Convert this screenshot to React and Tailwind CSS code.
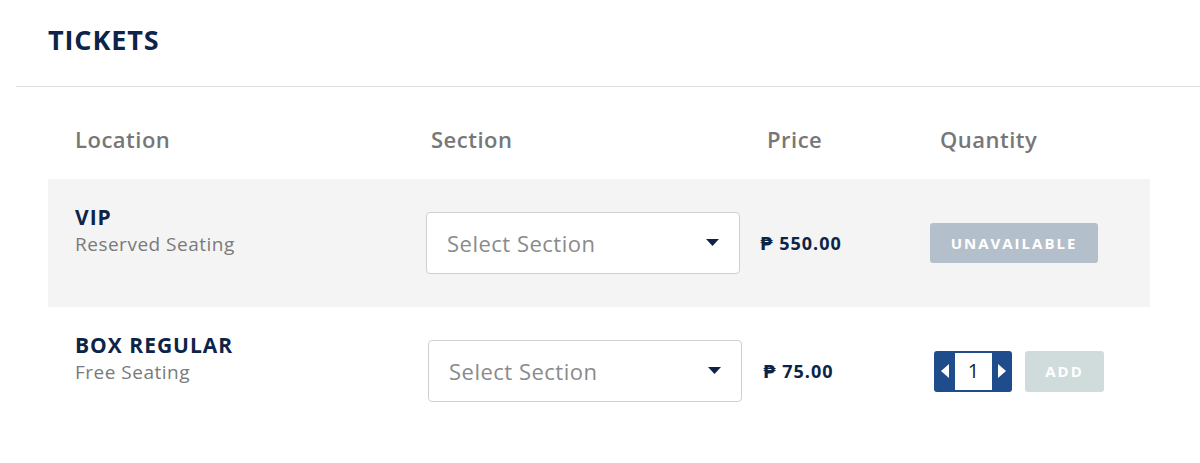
import React from "react";

const FONT = { fontFamily: '"Open Sans", "DejaVu Sans", sans-serif' };

function Caret() {
  return (
    <svg width="13" height="8" viewBox="0 0 13 8" className="shrink-0">
      <path d="M0 0 L13 0 L6.5 7 Z" fill="#0d2448" />
    </svg>
  );
}

function SelectBox() {
  return (
    <div className="w-[314px] h-[62px] bg-white border border-[#cfcfcf] rounded-[4px] flex items-center justify-between pl-[20px] pr-[20px]">
      <span className="text-[22px] tracking-[0.5px] text-[#8a8a8a]">Select Section</span>
      <Caret />
    </div>
  );
}

function Stepper() {
  return (
    <div className="flex h-[41px] w-[78px] bg-[#1f4c8a] rounded-[3px] items-center">
      <div className="w-[21px] flex justify-center">
        <svg width="8" height="14" viewBox="0 0 8 14">
          <path d="M8 0 L8 14 L0 7 Z" fill="#fff" />
        </svg>
      </div>
      <div className="w-[37px] h-[37px] bg-white flex items-center justify-center text-[20px] text-[#222]">1</div>
      <div className="w-[20px] flex justify-center">
        <svg width="8" height="14" viewBox="0 0 8 14">
          <path d="M0 0 L0 14 L8 7 Z" fill="#fff" />
        </svg>
      </div>
    </div>
  );
}

export default function App() {
  return (
    <div className="w-[1200px] h-[463px] bg-white" style={FONT}>
      <div className="pl-[48px] pt-[20px] h-[86px]">
        <h1 className="text-[27px] font-bold text-[#0d2448] tracking-[0.9px]">TICKETS</h1>
      </div>
      <div className="ml-[16px] border-t border-[#e2e2e2]" />

      <div className="px-[48px]">
        {/* header */}
        <div className="grid grid-cols-[356px_336px_173px_1fr] pl-[27px] pt-[12px] h-[92px] items-center text-[22px] font-semibold text-[#777] tracking-[0.5px]">
          <div>Location</div>
          <div>Section</div>
          <div>Price</div>
          <div>Quantity</div>
        </div>

        {/* VIP row */}
        <div className="w-[1102px] h-[128px] bg-[#f4f4f4] grid grid-cols-[351px_334px_170px_1fr] pl-[27px] items-center">
          <div className="self-start pt-[24px]">
            <div className="text-[21px] font-bold text-[#0d2448] leading-[28px] tracking-[1px]">VIP</div>
            <div className="text-[19px] text-[#7a7a7a] leading-[26px] tracking-[0.5px]">Reserved Seating</div>
          </div>
          <div>
            <SelectBox />
          </div>
          <div className="text-[18px] font-bold text-[#0d2448] tracking-[1px]">₱ 550.00</div>
          <div>
            <button className="h-[40px] w-[168px] bg-[#b4bfcc] rounded-[3px] text-white text-[15px] font-bold tracking-[2px]">
              UNAVAILABLE
            </button>
          </div>
        </div>

        {/* Box Regular row */}
        <div className="w-[1102px] h-[128px] grid grid-cols-[353px_335px_171px_1fr] pl-[27px] items-center">
          <div className="self-start pt-[24px]">
            <div className="text-[21px] font-bold text-[#0d2448] leading-[28px] tracking-[1px]">BOX REGULAR</div>
            <div className="text-[19px] text-[#7a7a7a] leading-[26px] tracking-[0.5px]">Free Seating</div>
          </div>
          <div>
            <SelectBox />
          </div>
          <div className="text-[18px] font-bold text-[#0d2448] tracking-[1px]">₱ 75.00</div>
          <div className="flex items-center gap-[13px]">
            <Stepper />
            <button className="h-[41px] w-[79px] bg-[#cfdcdb] rounded-[3px] text-white text-[15px] font-bold tracking-[2px]">
              ADD
            </button>
          </div>
        </div>
      </div>
    </div>
  );
}
